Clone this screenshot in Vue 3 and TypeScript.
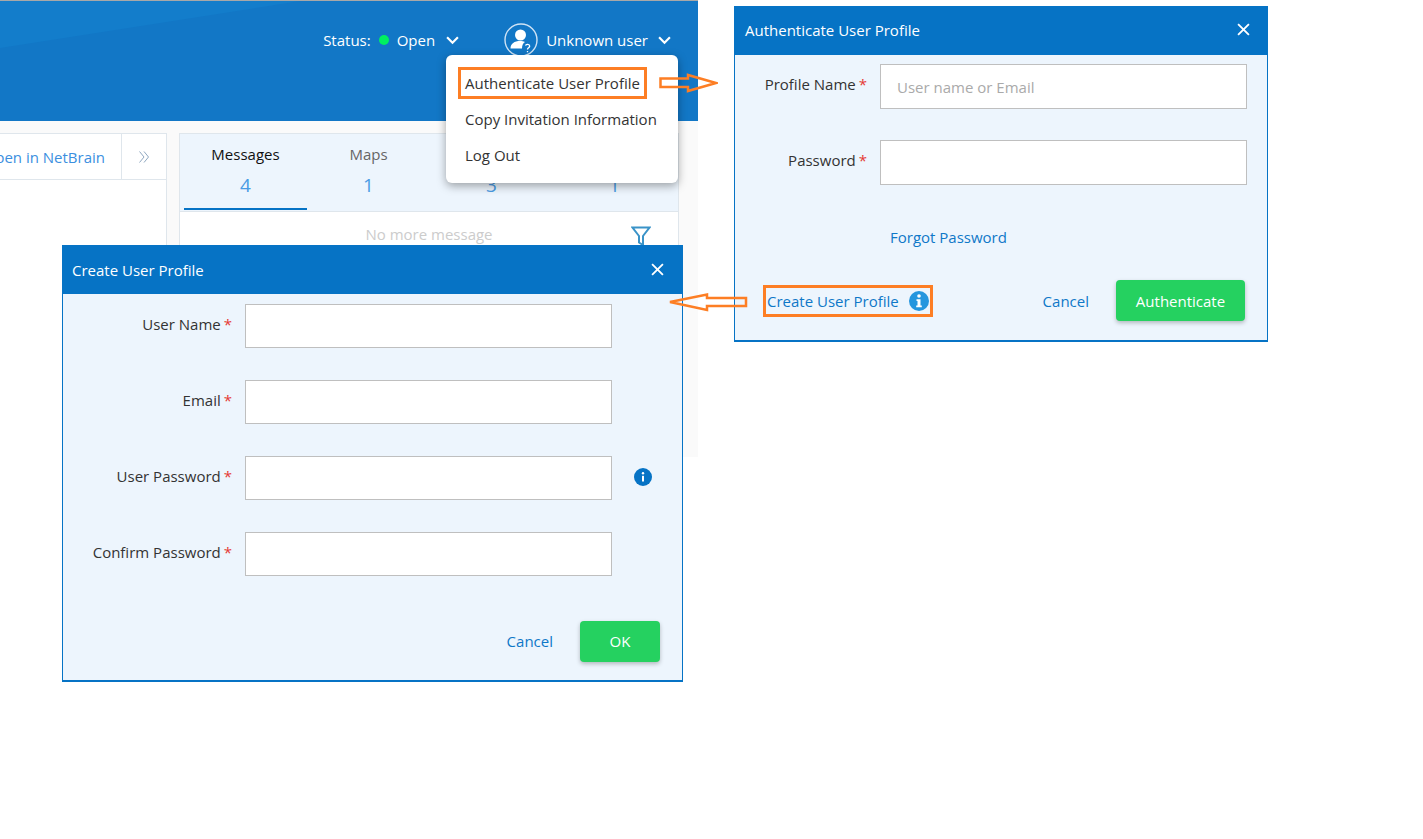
<script setup lang="ts">
interface Field { label: string; info?: boolean }
const createFields: Field[] = [
  { label: 'User Name' },
  { label: 'Email' },
  { label: 'User Password', info: true },
  { label: 'Confirm Password' },
]
const tabs = [
  { name: 'Messages', count: 4, active: true },
  { name: 'Maps', count: 1, active: false },
  { name: '', count: 3, active: false },
  { name: '', count: 1, active: false },
]
</script>

<template>
  <div class="canvas">
    <div class="app">
      <header class="topbar">
        <div class="sheen"></div>
        <div class="status">
          <span>Status:</span>
          <i class="dot"></i>
          <span class="open">Open</span>
          <svg class="chev" viewBox="0 0 12 8"><path d="M1 1l5 5 5-5" /></svg>
        </div>
        <div class="user">
          <svg class="avatar" viewBox="0 0 34 34">
            <circle cx="17" cy="17" r="16" fill="none" stroke="#cfe3f5" stroke-width="1.4" />
            <circle cx="16.5" cy="12" r="5.5" fill="#fff" />
            <path d="M6.500 25.500c0-5 4-7.500 9.500-7.500 2 0 3.500.3 5 1-2 1.200-3 3.200-3 6.500z" fill="#fff" />
            <path d="M21.500 22.500c.5-1.600 4-1.600 4.200.5.100 1.700-2.200 1.700-2.200 3.400M23.500 28v1.300" fill="none" stroke="#fff" stroke-width="1.300" />
          </svg>
          <span class="uname">Unknown user</span>
          <svg class="chev" viewBox="0 0 12 8"><path d="M1 1l5 5 5-5" /></svg>
        </div>
      </header>

      <div class="content">
        <section class="left-panel">
          <div class="left-toolbar">
            <a class="open-link">Open in NetBrain</a>
            <span class="expand">
              <svg viewBox="0 0 12 12"><path d="M1.500 .5l4.500 5.500-4.500 5.500M6 .5l4.500 5.500-4.500 5.500" /></svg>
            </span>
          </div>
        </section>
        <section class="right-panel">
          <div class="tabs">
            <div v-for="(t, i) in tabs" :key="i" class="tab" :class="{ active: t.active }">
              <div class="tab-name">{{ t.name }}</div>
              <div class="tab-count">{{ t.count }}</div>
            </div>
          </div>
          <div class="msg-row">
            <span class="no-more">No more message</span>
            <svg class="filter" viewBox="0 0 20 22"><path d="M1.500 1.500h17l-6.500 8.500v9l-4-2.500v-6.500z" /></svg>
          </div>
        </section>
      </div>
    </div>

    <ul class="menu">
      <li class="hl">Authenticate User Profile</li>
      <li>Copy Invitation Information</li>
      <li>Log Out</li>
    </ul>

    <div class="dialog auth">
      <div class="dlg-head">
        <span>Authenticate User Profile</span>
        <svg class="close" viewBox="0 0 12 12"><path d="M1 1l10 10M11 1L1 11" /></svg>
      </div>
      <div class="dlg-body">
        <div class="frow">
          <label>Profile Name<em>*</em></label>
          <div class="input ph">User name or Email</div>
        </div>
        <div class="frow">
          <label>Password<em>*</em></label>
          <div class="input"></div>
        </div>
        <a class="forgot">Forgot Password</a>
        <div class="auth-foot">
          <div class="create-link">
            <a>Create User Profile</a>
            <svg class="info-big" viewBox="0 0 20 20">
              <circle cx="10" cy="10" r="10" fill="#2596de" />
              <circle cx="10" cy="5" r="1.800" fill="#fff" />
              <path d="M7.500 8.300h4v6.200h1.300v1.700h-5.600v-1.700h1.300v-4.500h-1z" fill="#fff" />
            </svg>
          </div>
          <a class="cancel">Cancel</a>
          <button class="btn btn-auth">Authenticate</button>
        </div>
      </div>
    </div>

    <div class="dialog create">
      <div class="dlg-head">
        <span>Create User Profile</span>
        <svg class="close" viewBox="0 0 12 12"><path d="M1 1l10 10M11 1L1 11" /></svg>
      </div>
      <div class="dlg-body">
        <div v-for="f in createFields" :key="f.label" class="frow">
          <label>{{ f.label }}<em>*</em></label>
          <div class="input"></div>
          <svg v-if="f.info" class="info" viewBox="0 0 18 18">
            <circle cx="9" cy="9" r="9" fill="#0673c5" />
            <circle cx="9" cy="5.300" r="1.200" fill="#fff" />
            <rect x="8" y="7.800" width="2" height="5.700" fill="#fff" />
          </svg>
        </div>
        <div class="create-foot">
          <a class="cancel">Cancel</a>
          <button class="btn btn-ok">OK</button>
        </div>
      </div>
    </div>

    <svg class="arrow arrow-right" viewBox="0 0 59 20">
      <path d="M1.500 5.500h27.500v-3.500l28 8-28 8v-4h-27.500z" />
    </svg>
    <svg class="arrow arrow-left" viewBox="0 0 80 20">
      <path d="M78 6h-39v-3.500l-37 7.500 37 8v-4h39z" />
    </svg>
  </div>
</template>

<style>
html, body { margin: 0; background: #fff; }
</style>

<style scoped>
.canvas {
  position: relative;
  width: 1423px;
  height: 839px;
  overflow: hidden;
  background: #fff;
  font-family: "Open Sans", "Liberation Sans", sans-serif;
  font-size: 15px;
  color: #333;
}
.app {
  width: 698px;
  height: 457px;
  background: #fafafa;
  display: flex;
  flex-direction: column;
}
.topbar {
  position: relative;
  height: 121px;
  box-sizing: border-box;
  flex: none;
  background: #1277c6;
  border-top: 1px solid #a8a8a8;
  overflow: hidden;
  display: flex;
  justify-content: flex-end;
  align-items: flex-start;
  padding: 23px 27px 0 0;
  color: #fff;
}
.sheen {
  position: absolute;
  left: 0;
  top: 0;
  width: 300px;
  height: 47px;
  background: #137dcb;
  clip-path: polygon(0 0, 100% 0, 0 100%);
}
.status, .user {
  position: relative;
  display: flex;
  align-items: center;
  height: 32px;
}
.status { margin-right: 45px; }
.dot {
  width: 10px;
  height: 10px;
  border-radius: 50%;
  background: #00f060;
  margin: 0 8px;
}
.open { margin-right: 11px; }
.chev { width: 13px; height: 9px; fill: none; stroke: #fff; stroke-width: 2; }
.avatar { width: 34px; height: 34px; margin-right: 8px; }
.uname { margin-right: 10px; }

.content {
  flex: 1;
  min-height: 0;
  display: flex;
  align-items: stretch;
  gap: 12px;
  padding-top: 12px;
}
.left-panel {
  width: 167px;
  box-sizing: border-box;
  background: #fff;
  border: solid #dfe6ec;
  border-width: 1px 1px 0 0;
  overflow: hidden;
}
.left-toolbar {
  height: 45px;
  display: flex;
  justify-content: flex-end;
  align-items: center;
  border-bottom: 1px solid #dfe6ec;
}
.open-link { color: #3b8fe0; white-space: nowrap; padding-right: 16px; }
.expand {
  width: 45px;
  height: 45px;
  flex: none;
  box-sizing: border-box;
  border-left: 1px solid #dfe6ec;
  display: flex;
  align-items: center;
  justify-content: center;
}
.expand svg { width: 12px; height: 12px; fill: none; stroke: #8fa8c0; stroke-width: 1; }
.right-panel {
  width: 500px;
  box-sizing: border-box;
  background: #fff;
  border: solid #dfe6ec;
  border-width: 1px 1px 0;
}
.tabs {
  display: flex;
  height: 78px;
  box-sizing: border-box;
  padding: 0 0 0 4px;
  background: #edf5fd;
  border-bottom: 1px solid #dfe6ec;
}
.tab {
  width: 123px;
  height: 76px;
  box-sizing: border-box;
  text-align: center;
  padding-top: 10px;
}
.tab.active { border-bottom: 2px solid #0673c5; }
.tab-name { color: #666; line-height: 20px; height: 20px; }
.tab.active .tab-name { color: #111; }
.tab-count { color: #4a9be4; font-size: 19px; line-height: 24px; margin-top: 9px; }
.msg-row {
  position: relative;
  display: flex;
  justify-content: center;
  padding: 12px 0 0;
}
.no-more { color: #ccc; line-height: 20px; }
.filter {
  position: absolute;
  right: 27px;
  top: 14px;
  width: 20px;
  height: 22px;
  fill: none;
  stroke: #3a93c8;
  stroke-width: 2;
}

.menu {
  position: absolute;
  left: 446px;
  top: 55px;
  width: 232px;
  height: 128px;
  box-sizing: border-box;
  margin: 0;
  padding: 10px 0 0 19px;
  list-style: none;
  background: #fff;
  border-radius: 6px;
  box-shadow: 0 3px 10px rgba(0, 0, 0, .35);
  color: #333;
}
.menu li { height: 36px; line-height: 36px; white-space: nowrap; position: relative; }
.hl::before {
  content: "";
  position: absolute;
  left: -7px;
  top: 2px;
  width: 189px;
  height: 32px;
  box-sizing: border-box;
  border: 3px solid #fd7e24;
}

.arrow { position: absolute; fill: none; stroke: #fd7e24; stroke-width: 2.500; }
.arrow-right { left: 659px; top: 73px; width: 59px; height: 20px; }
.arrow-left { left: 668px; top: 292px; width: 80px; height: 20px; }

.dialog {
  position: absolute;
  box-sizing: border-box;
  display: flex;
  flex-direction: column;
  background: #edf5fd;
  border: solid #0673c5;
  border-width: 0 1px 2px;
}
.auth { left: 734px; top: 6px; width: 534px; height: 336px; }
.create { left: 62px; top: 245px; width: 621px; height: 437px; }
.dlg-head {
  height: 49px;
  box-sizing: border-box;
  flex: none;
  margin: 0 -1px;
  background: #0673c5;
  color: #fff;
  display: flex;
  align-items: center;
  justify-content: space-between;
}
.auth .dlg-head { padding: 0 18px 2px 11px; }
.create .dlg-head { padding: 0 19px 0 10px; }
.close { width: 13px; height: 13px; fill: none; stroke: #fff; stroke-width: 1.700; }
.dlg-body { flex: 1; display: flex; flex-direction: column; }
.auth .dlg-body { padding-top: 9px; }
.create .dlg-body { padding-top: 10px; }
.frow { display: flex; align-items: flex-start; position: relative; height: 76px; }
.frow label {
  text-align: right;
  white-space: nowrap;
  color: #333;
  line-height: 20px;
  padding-top: 10px;
}
.auth .frow label { width: 132px; margin-right: 13px; }
.create .frow label { width: 169px; margin-right: 13px; }
.frow em { color: #e53935; font-style: normal; margin-left: 3px; }
.input {
  width: 367px;
  box-sizing: border-box;
  background: #fff;
  border: 1px solid #bfbfbf;
  line-height: 20px;
  padding: 12px 16px 0;
}
.auth .input { height: 45px; }
.create .input { height: 44px; }
.ph { color: #aaa; }
.info { position: absolute; left: 571px; top: 12px; width: 18px; height: 18px; }
.forgot { color: #0f78c8; margin: 11px 0 0 155px; line-height: 20px; }
.auth-foot {
  display: flex;
  align-items: center;
  margin-top: 33px;
  padding: 0 22px 0 28px;
}
.create-link {
  width: 170px;
  height: 32px;
  box-sizing: border-box;
  border: 3px solid #fd7e24;
  display: flex;
  align-items: center;
  padding-left: 1px;
  color: #0f78c8;
  margin-right: auto;
}
.info-big { width: 20px; height: 20px; margin-left: 10px; flex: none; }
.cancel { color: #0f78c8; }
.auth .cancel { margin-right: 27px; }
.btn {
  height: 41px;
  border: 0;
  border-radius: 4px;
  background: #25d160;
  color: #fff;
  font: 400 15px "Open Sans", "Liberation Sans", sans-serif;
  box-shadow: 0 2px 4px rgba(0, 0, 0, .25);
}
.btn-auth { width: 129px; }
.btn-ok { width: 80px; padding-bottom: 3px; }
.create-foot .cancel { margin-bottom: 2px; }
.create-foot {
  display: flex;
  justify-content: flex-end;
  align-items: center;
  gap: 27px;
  margin-top: 13px;
  padding-right: 22px;
}
</style>
